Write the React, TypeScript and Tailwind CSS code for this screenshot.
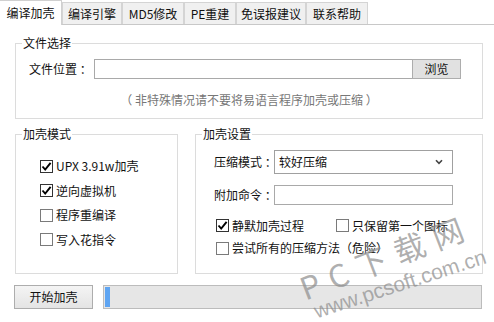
import React from "react";

const tabs = [
  { name: "编译加壳", w: "w-[62px]" },
  { name: "编译引擎", w: "w-[60px]" },
  { name: "MD5修改", w: "w-[62px]" },
  { name: "PE重建", w: "w-[52px]" },
  { name: "免误报建议", w: "w-[70px]" },
  { name: "联系帮助", w: "w-[62px]" },
];

function Check({ checked, label }: { checked?: boolean; label: string }) {
  return (
    <div className="flex items-center gap-[3px] h-[16px]">
      <span
        className={`w-[13px] h-[13px] shrink-0 border bg-white flex items-center justify-center ${
          checked ? "border-[#333333]" : "border-[#7a7a7a]"
        }`}
      >
        {checked && (
          <svg width="11" height="11" viewBox="0 0 11 11">
            <path d="M1.5 5.5 L4.2 8.6 L9.6 1.8" stroke="#000" strokeWidth="1.9" fill="none" />
          </svg>
        )}
      </span>
      <span className="leading-[16px] whitespace-nowrap">{label}</span>
    </div>
  );
}

export default function App() {
  return (
    <div className="relative w-[494px] h-[322px] overflow-hidden bg-white text-[12px] text-[#111] font-['Microsoft_YaHei','Noto_Sans_CJK_SC',sans-serif]">
      {/* tabs */}
      <div className="flex h-[25px] border-b border-[#c8c8c8] items-end">
        {tabs.map((t, i) =>
          i === 0 ? (
            <div
              key={t.name}
              className={`${t.w} h-[25px] -mb-px bg-white border-r border-t border-[#d0d0d0] flex items-center justify-center leading-[14px]`}
            >
              {t.name}
            </div>
          ) : (
            <div
              key={t.name}
              className={`${t.w} h-[22px] bg-[#f0f0f0] border border-b-0 border-[#d4d4d4] flex items-center justify-center leading-[14px]`}
            >
              {t.name}
            </div>
          )
        )}
      </div>

      {/* 文件选择 */}
      <fieldset className="ml-[15px] mt-[11px] w-[468px] h-[83px] border border-[#dcdcdc]">
        <legend className="ml-[6px] px-px leading-[14px]">文件选择</legend>
        <div className="flex items-center mt-[9px] pl-[13px] h-[20px]">
          <span className="w-[65px] leading-[14px]">文件位置 ：</span>
          <div className="w-[319px] h-[20px] border border-[#a9a9a9] bg-white" />
          <div className="w-[49px] h-[20px] -ml-px border border-[#adadad] bg-[#e1e1e1] flex items-center justify-center leading-[14px]">
            浏览
          </div>
        </div>
        <div className="mt-[14px] text-center leading-[14px] text-[#777777]">
          （ 非特殊情况请不要将易语言程序加壳或压缩 ）
        </div>
      </fieldset>

      <div className="flex ml-[15px] mt-[8px] gap-[17px]">
        {/* 加壳模式 */}
        <fieldset className="w-[163px] h-[147px] border border-[#dcdcdc]">
          <legend className="ml-[6px] px-px leading-[14px]">加壳模式</legend>
          <div className="flex flex-col pl-[24px] mt-[13px]">
            <div className="h-[24.5px] flex items-center">
              <Check checked label="UPX 3.91w加壳" />
            </div>
            <div className="h-[24.5px] flex items-center">
              <Check checked label="逆向虚拟机" />
            </div>
            <div className="h-[24.5px] flex items-center">
              <Check label="程序重编译" />
            </div>
            <div className="h-[24.5px] flex items-center">
              <Check label="写入花指令" />
            </div>
          </div>
        </fieldset>

        {/* 加壳设置 */}
        <fieldset className="w-[288px] h-[147px] border border-[#dcdcdc]">
          <legend className="ml-[6px] px-px leading-[14px]">加壳设置</legend>
          <div className="flex items-center mt-[9px] pl-[18px]">
            <span className="w-[60px] leading-[14px] whitespace-nowrap">压缩模式 ：</span>
            <div className="w-[179px] h-[24px] border border-[#a0a0a0] bg-white flex items-center justify-between pl-[4px] pr-[9px]">
              <span className="leading-[14px]">较好压缩</span>
              <svg width="8" height="6" viewBox="0 0 8 6">
                <path d="M1 1.2 L4 4.4 L7 1.2" stroke="#444" strokeWidth="1.6" fill="none" />
              </svg>
            </div>
          </div>
          <div className="flex items-center mt-[11px] pl-[18px]">
            <span className="w-[60px] leading-[14px] whitespace-nowrap">附加命令 ：</span>
            <div className="w-[179px] h-[20px] border border-[#a9a9a9] bg-white" />
          </div>
          <div className="flex mt-[12.5px] pl-[20px]">
            <div className="w-[120px]">
              <Check checked label="静默加壳过程" />
            </div>
            <Check label="只保留第一个图标" />
          </div>
          <div className="mt-[6.5px] pl-[20px]">
            <Check label="尝试所有的压缩方法（危险）" />
          </div>
        </fieldset>
      </div>

      {/* bottom */}
      <div className="flex ml-[14px] mt-[11px] gap-[10px]">
        <div className="w-[79px] h-[24px] border border-[#adadad] bg-gradient-to-b from-[#f4f4f4] to-[#e4e4e4] flex items-center justify-center leading-[14px]">
          开始加壳
        </div>
        <div className="w-[379px] h-[24px] border border-[#bcbcbc] bg-[#e6e6e6] flex p-px">
          <div className="w-[5px] h-full bg-[#5fa5f2]" />
        </div>
      </div>

      {/* watermark */}
      <div className="pointer-events-none absolute left-[386px] top-[256px] -translate-x-1/2 -translate-y-1/2 rotate-[-21deg] whitespace-nowrap text-[31px] leading-[34px] tracking-[10px] text-[#8c8c8c]/70 font-['Noto_Sans_CJK_SC',sans-serif]">
        PC下载网
      </div>
      <div className="pointer-events-none absolute left-[400px] top-[284px] -translate-x-1/2 -translate-y-1/2 rotate-[-18deg] whitespace-nowrap text-[21px] leading-[24px] text-[#8c8c8c]/70 font-['Liberation_Sans',sans-serif]">
        www.pcsoft.com.cn
      </div>
    </div>
  );
}
